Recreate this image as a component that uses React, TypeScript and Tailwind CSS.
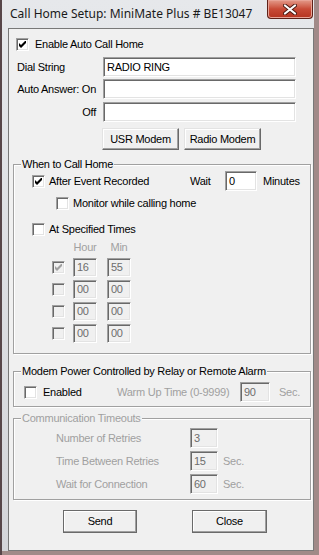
import React from "react";

const SUNKEN =
  "border border-t-[#a0a0a0] border-l-[#a0a0a0] border-r-white border-b-white shadow-[inset_1px_1px_0_#696969,inset_-1px_-1px_0_#e3e3e3]";

function CheckBox({ checked = false, disabled = false }: { checked?: boolean; disabled?: boolean }) {
  return (
    <span className={`flex h-[13px] w-[13px] shrink-0 items-center justify-center ${SUNKEN} ${disabled ? "bg-[#f0f0f0]" : "bg-white"}`}>
      {checked && (
        <svg width="7" height="7" viewBox="0 0 7 7">
          <polygon points="0,2 2,4 7,-1 7,2 2,7 0,5" fill={disabled ? "#a0a0a0" : "#000"} />
        </svg>
      )}
    </span>
  );
}

function Field({ value = "", className = "", disabled = false }: { value?: string; className?: string; disabled?: boolean }) {
  return (
    <div
      className={`flex shrink-0 items-center pl-[3px] leading-none ${SUNKEN} ${
        disabled ? "bg-[#f0f0f0] text-[#6d6d6d]" : "bg-white text-black"
      } ${className}`}
    >
      {value}
    </div>
  );
}

function Btn({ label, className = "", dark = false }: { label: string; className?: string; dark?: boolean }) {
  return (
    <button
      type="button"
      className={`flex items-center justify-center border bg-[#f0f0f0] shadow-[inset_-1px_-1px_0_#a0a0a0,inset_1px_1px_0_#fff] ${
        dark ? "border-[#6a6a6a]" : "border-t-[#e3e3e3] border-l-[#e3e3e3] border-r-[#696969] border-b-[#696969]"
      } ${className}`}
    >
      {label}
    </button>
  );
}

function Group({ title, disabled = false, className = "", children }: { title: string; disabled?: boolean; className?: string; children: React.ReactNode }) {
  return (
    <div className={`ml-[4px] w-[298px] border border-[#a0a0a0] shadow-[inset_1px_1px_0_#fff,1px_1px_0_#fff] ${className}`}>
      <div className={`-mt-[7px] ml-[7px] w-fit bg-[#f0f0f0] px-[1px] leading-[13px] ${disabled ? "text-[#a0a0a0]" : ""}`}>{title}</div>
      {children}
    </div>
  );
}

export default function App() {
  return (
    <div className="h-[555px] w-[319px] overflow-hidden bg-[#574649] font-['Liberation_Sans',Arial,sans-serif] text-[11px] tracking-[-0.25px] text-black">
      <div className="ml-[2px] flex h-[555px] w-[317px] flex-col border-r-[5px] border-b-[4px] border-r-[#a18a88] border-b-[#a18a88] bg-gradient-to-b from-[#e6e8eb] to-[#d4d5d9]">
        {/* title bar */}
        <div className="flex h-[28px] items-start">
          <div className="mt-[6px] pl-[8px] font-['Noto_Sans',sans-serif] text-[12px] leading-[16px] tracking-normal text-[#1a1a1a]">
            Call Home Setup: MiniMate Plus # BE13047
          </div>
          <div className="ml-auto mr-[1px] flex h-[19px] w-[46px] items-center justify-center rounded-b-[4px] border border-t-0 border-[#5e2118] bg-gradient-to-b from-[#e39a8a] via-[#c84a36] to-[#b5331f] shadow-[inset_0_0_0_1px_#e8a396]">
            <svg width="14" height="11" viewBox="0 0 14 11">
              <path d="M2 1.5 L12 9.5 M12 1.5 L2 9.5" stroke="#4a1a12" strokeWidth="4" strokeLinecap="round" />
              <path d="M2 1.5 L12 9.5 M12 1.5 L2 9.5" stroke="#fff" strokeWidth="2.2" strokeLinecap="round" />
            </svg>
          </div>
        </div>

        {/* client area */}
        <div className="ml-[6px] h-[523px] w-[306px] border border-[#787878] bg-[#f0f0f0]">
          <div className="mt-[9px] flex h-[13px] items-center pl-[7px]">
            <CheckBox checked />
            <span className="ml-[6px]">Enable Auto Call Home</span>
          </div>

          <div className="mt-[6px] flex h-[20px] items-center pl-[7px]">
            <span className="w-[80px] pl-[1px]">Dial String</span>
            <Field value="RADIO RING" className="ml-[7px] h-[20px] w-[193px]" />
          </div>
          <div className="mt-[2px] flex h-[20px] items-center pl-[7px]">
            <span className="w-[80px] text-right">Auto Answer: On</span>
            <Field className="ml-[7px] h-[20px] w-[193px]" />
          </div>
          <div className="mt-[3px] flex h-[20px] items-center pl-[7px]">
            <span className="w-[80px] text-right">Off</span>
            <Field className="ml-[7px] h-[20px] w-[193px]" />
          </div>

          <div className="mt-[6px] flex h-[22px] gap-[5px] pl-[93px]">
            <Btn label="USR Modem" className="w-[77px]" />
            <Btn label="Radio Modem" className="w-[77px]" />
          </div>

          <Group title="When to Call Home" className="mt-[14px] pb-[10px]">
            <div className="flex h-[20px] items-center pl-[18px]">
              <CheckBox checked />
              <span className="ml-[4px] w-[141px]">After Event Recorded</span>
              <span className="w-[35px]">Wait</span>
              <Field value="0" className="h-[20px] w-[32px]" />
              <span className="ml-[6px]">Minutes</span>
            </div>
            <div className="mt-[6px] flex h-[13px] items-center pl-[42px]">
              <CheckBox />
              <span className="ml-[4px]">Monitor while calling home</span>
            </div>
            <div className="mt-[13px] flex h-[13px] items-center pl-[18px]">
              <CheckBox />
              <span className="ml-[4px]">At Specified Times</span>
            </div>
            <div className="mt-[5px] flex h-[13px] items-center pl-[59px] text-[#a0a0a0]">
              <span className="w-[24px] text-center">Hour</span>
              <span className="ml-[10px] w-[24px] text-center">Min</span>
            </div>
            <div className="mt-[4px] flex flex-col gap-[3px]">
              {[
                { on: true, h: "16", m: "55" },
                { on: false, h: "00", m: "00" },
                { on: false, h: "00", m: "00" },
                { on: false, h: "00", m: "00" },
              ].map((r, i) => (
                <div key={i} className="flex h-[19px] items-center pl-[38px]">
                  <CheckBox checked={r.on} disabled />
                  <Field value={r.h} disabled className="ml-[8px] h-[19px] w-[24px]" />
                  <Field value={r.m} disabled className="ml-[10px] h-[19px] w-[24px]" />
                </div>
              ))}
            </div>
          </Group>

          <Group title="Modem Power Controlled by Relay or Remote Alarm" className="mt-[17px] pb-[4px]">
            <div className="mt-[4px] flex h-[20px] items-center pl-[10px]">
              <CheckBox />
              <span className="ml-[6px] w-[74px]">Enabled</span>
              <span className="w-[123px] text-[#a0a0a0]">Warm Up Time (0-9999)</span>
              <Field value="90" disabled className="h-[20px] w-[30px]" />
              <span className="ml-[9px] text-[#a0a0a0]">Sec.</span>
            </div>
          </Group>

          <Group title="Communication Timeouts" disabled className="mt-[11px] pb-[5px]">
            <div className="mt-[3px] flex flex-col gap-[3px] text-[#a0a0a0]">
              {[
                { label: "Number of Retries", v: "3", sec: false },
                { label: "Time Between Retries", v: "15", sec: true },
                { label: "Wait for Connection", v: "60", sec: true },
              ].map((r) => (
                <div key={r.label} className="flex h-[20px] items-center pl-[42px]">
                  <span className="w-[134px]">{r.label}</span>
                  <Field value={r.v} disabled className="h-[20px] w-[28px]" />
                  {r.sec && <span className="ml-[5px]">Sec.</span>}
                </div>
              ))}
            </div>
          </Group>

          <div className="mt-[10px] flex h-[23px] gap-[55px] pl-[54px]">
            <Btn label="Send" dark className="w-[74px]" />
            <Btn label="Close" dark className="w-[75px]" />
          </div>
        </div>
      </div>
    </div>
  );
}
